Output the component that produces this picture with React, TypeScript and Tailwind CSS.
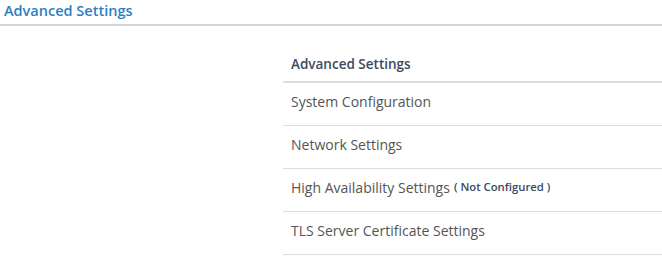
import React from 'react'

const rows = [
  { label: 'System Configuration' },
  { label: 'Network Settings' },
  { label: 'High Availability Settings', note: '( Not Configured )' },
  { label: 'TLS Server Certificate Settings' }
]

export default function App() {
  return <div className="w-[662px] h-[256px] overflow-hidden bg-white" style={{ fontFamily: '"Open Sans", "Liberation Sans", sans-serif' }}>
    <div className="pt-[1px] pl-[4px] pb-[3px] border-b-2 border-[#cfd5df] text-[14.5px] leading-5 font-semibold text-[#2a7fc4]">
      Advanced Settings
    </div>
    <div className="flex mt-[19px]">
      <div className="w-[283px] shrink-0" />
      <div className="flex-1">
        <div className="px-2 pt-[9px] pb-[7px] leading-5 text-[13.5px] font-semibold text-[#3b4a5e] border-b-2 border-[#dddddd]">
          Advanced Settings
        </div>
        {rows.map((row) => {
          return <div key={row.label} className="h-[43px] flex items-center px-2 pb-[6px] text-[14px] text-[#555555] border-b border-[#dddddd]">
            <span>{row.label}</span>
            {row.note && <span className="ml-[4px] text-[11.3px] font-semibold text-[#3b4a5e]">{row.note}</span>}
          </div>
        })}
      </div>
    </div>
  </div>
}
